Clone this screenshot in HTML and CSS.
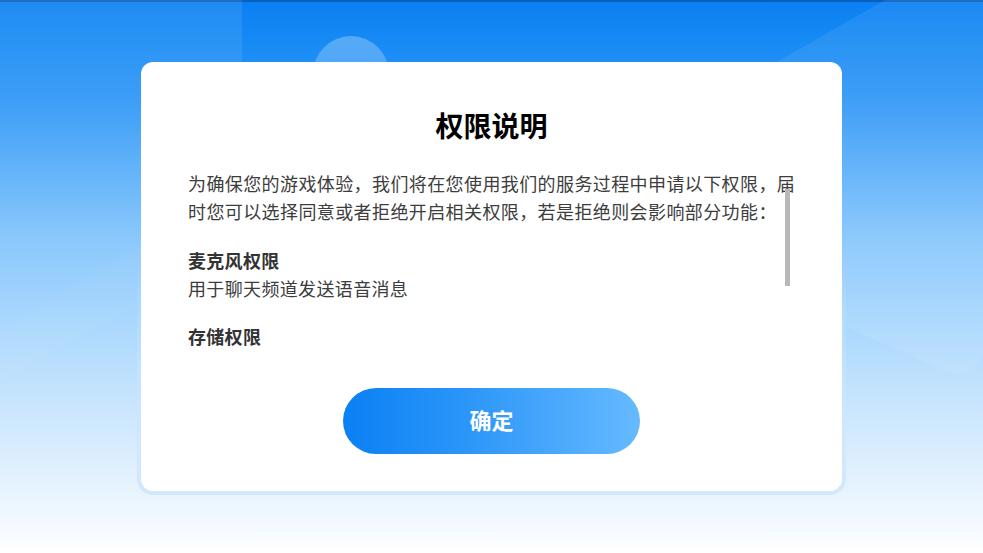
FILE: index.html
```html
<!DOCTYPE html>
<html lang="zh-CN">
<head>
<meta charset="utf-8">
<title>权限说明</title>
<link rel="stylesheet" href="styles.css">
</head>
<body>
<div class="page">
  <svg class="bg-deco" width="983" height="553" viewBox="0 0 983 553" aria-hidden="true">
    <defs>
      <linearGradient id="band" x1="0" y1="0" x2="0" y2="1">
        <stop offset="0" stop-color="#ffffff" stop-opacity="0.09"/>
        <stop offset="0.6" stop-color="#ffffff" stop-opacity="0.04"/>
        <stop offset="1" stop-color="#ffffff" stop-opacity="0"/>
      </linearGradient>
      <linearGradient id="circ" x1="0" y1="0" x2="0" y2="1">
        <stop offset="0" stop-color="#ffffff" stop-opacity="0.28"/>
        <stop offset="1" stop-color="#ffffff" stop-opacity="0.12"/>
      </linearGradient>
    </defs>
    <rect x="0" y="0" width="242" height="420" fill="url(#band)"/>
    <circle cx="351" cy="74" r="38" fill="url(#circ)"/>
    <path d="M885 0 L983 0 L983 356 Q970 378 948 372 L546 194 Z" fill="#ffffff" fill-opacity="0.08"/>
    <path d="M0 330 L150 240 L150 300 L0 380 Z" fill="#ffffff" fill-opacity="0.03"/>
  </svg>
  <div class="frame">
    <div class="card">
      <h1 class="title">权限说明</h1>
      <div class="scroll-wrap">
        <div class="scroll">
          <p class="intro">为确保您的游戏体验，我们将在您使用我们的服务过程中申请以下权限，届时您可以选择同意或者拒绝开启相关权限，若是拒绝则会影响部分功能：</p>
          <div class="perm">
            <h2 class="perm-title">麦克风权限</h2>
            <p class="perm-desc">用于聊天频道发送语音消息</p>
          </div>
          <div class="perm">
            <h2 class="perm-title">存储权限</h2>
          </div>
        </div>
        <div class="thumb"></div>
      </div>
      <div class="actions">
        <button class="btn-ok" type="button">确定</button>
      </div>
    </div>
  </div>
</div>
</body>
</html>
```

FILE: styles.css
```css
* { box-sizing: border-box; }
html, body {
  margin: 0;
  padding: 0;
}
body {
  font-family: "Noto Sans CJK SC", "Noto Sans", sans-serif;
}
.page {
  position: relative;
  width: 983px;
  height: 553px;
  overflow: hidden;
  padding-top: 62px;
  background: linear-gradient(to bottom,
    #0a7ff2 0px,
    #168af4 40px,
    #2f96f6 100px,
    #5aaffa 170px,
    #86c6fc 240px,
    #a3d4fd 310px,
    #bfe1fd 380px,
    #d9edfe 450px,
    #eef7fe 510px,
    #ffffff 553px);
  box-shadow: inset 0 2px 0 rgba(10, 70, 150, 0.55);
}
.bg-deco {
  position: absolute;
  left: 0;
  top: 0;
  z-index: 0;
}
.frame {
  position: relative;
  z-index: 1;
  width: 709px;
  margin: 0 auto;
  padding: 0 4px 4px 4px;
  border-radius: 0 0 16px 16px;
  background: linear-gradient(to bottom,
    rgba(214, 235, 253, 0) 0%,
    rgba(214, 235, 253, 0) 45%,
    rgba(206, 230, 253, 0.9) 100%);
}
.card {
  height: 429px;
  background: #ffffff;
  border-radius: 12px;
  padding: 43px 47px 36px 47px;
  display: flex;
  flex-direction: column;
}
.title {
  margin: 0;
  text-align: center;
  font-size: 28px;
  line-height: 40px;
  font-weight: 700;
  color: #000000;
}
.scroll-wrap {
  position: relative;
  margin-top: 24px;
  width: 612px;
  height: 182px;
}
.scroll {
  height: 100%;
  overflow: hidden;
}
.intro {
  margin: 0;
  font-size: 18px;
  line-height: 28px;
  letter-spacing: 0.4px;
  color: #3d3d3d;
}
.perm {
  margin-top: 21px;
}
.perm + .perm {
  margin-top: 20px;
}
.perm-title {
  margin: 0;
  font-size: 18px;
  line-height: 28px;
  font-weight: 700;
  letter-spacing: 0.3px;
  color: #333333;
}
.perm-desc {
  margin: 0;
  font-size: 18px;
  line-height: 28px;
  letter-spacing: 0.35px;
  color: #3d3d3d;
}
.thumb {
  position: absolute;
  left: 597px;
  top: 20px;
  width: 5px;
  height: 97px;
  background: #b8b8b8;
}
.actions {
  margin-top: 37px;
  display: flex;
  justify-content: center;
}
.btn-ok {
  width: 297px;
  height: 66px;
  border: none;
  border-radius: 33px;
  background: linear-gradient(to right, #0a80f5 0%, #2a95f8 40%, #66baff 100%);
  color: #ffffff;
  font-family: "Noto Sans CJK SC", "Noto Sans", sans-serif;
  font-size: 22px;
  font-weight: 700;
  line-height: 62px;
  padding: 0 0 4px 0;
  cursor: pointer;
}
```
